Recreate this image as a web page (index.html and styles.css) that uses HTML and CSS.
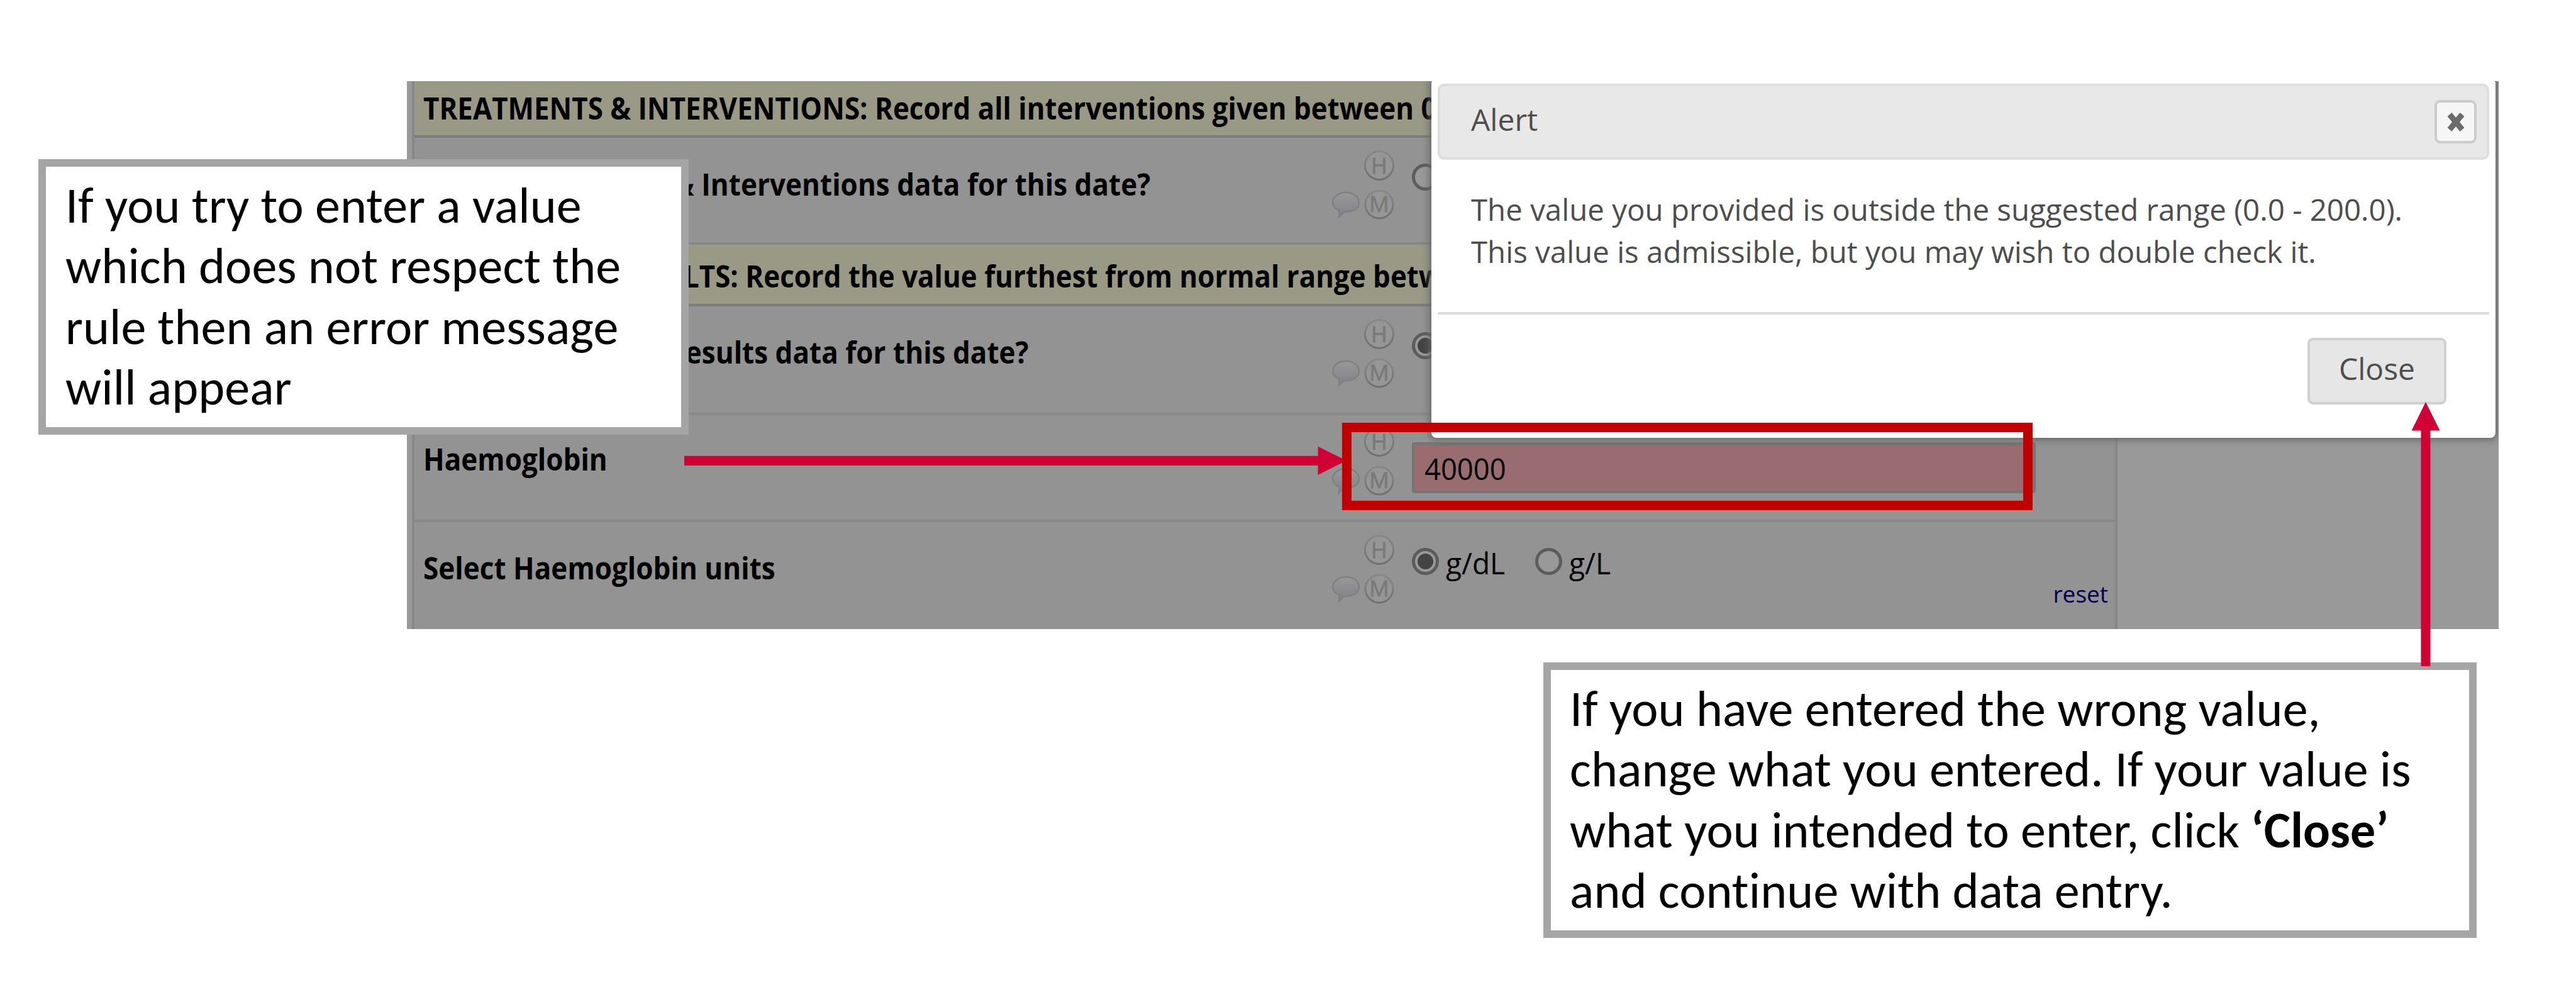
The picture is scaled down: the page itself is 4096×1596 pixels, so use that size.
FILE: index.html
```html
<!DOCTYPE html>
<html lang="en">
<head>
<meta charset="utf-8">
<title>Out-of-range value alert</title>
<link rel="stylesheet" href="styles.css">
</head>
<body>
<svg class="defs" aria-hidden="true">
  <defs>
    <linearGradient id="ring" x1="0" y1="0" x2="0" y2="1"><stop offset="0" stop-color="#888"/><stop offset="1" stop-color="#707070"/></linearGradient>
    <linearGradient id="puff" x1="0" y1="0" x2="0" y2="1"><stop offset="0" stop-color="#999"/><stop offset="1" stop-color="#808088"/></linearGradient>
    <symbol id="tools" viewBox="0 0 102 112">
      <circle cx="76" cy="24" r="22.5" fill="#969696" stroke="url(#ring)" stroke-width="3"/>
      <text class="glyph" x="76" y="36.5">H</text>
      <circle cx="76" cy="86" r="22" fill="#969696" stroke="url(#ring)" stroke-width="3"/>
      <text class="glyph" x="76" y="98">M</text>
      <path d="M23 67c12 0 21 7 21 16s-9 15-21 15l-3 0-8 8 1-10c-7-3-11-7-11-13 0-9 10-16 21-16z" fill="url(#puff)" stroke="#808082" stroke-width="2.5"/>
    </symbol>
  </defs>
</svg>
<main class="slide">
  <section class="form">
    <div class="table">
      <h2 class="band band-first"><span>TREATMENTS &amp; INTERVENTIONS: Record all interventions given between 0</span></h2>
      <div class="row r1">
        <span class="label">&amp; Interventions data for this date?</span>
        <svg class="tools"><use href="#tools"/></svg>
        <div class="field"><i class="radio"></i></div>
      </div>
      <h2 class="band band-results"><span>LTS: Record the value furthest from normal range betw</span></h2>
      <div class="row r2">
        <span class="label">esults data for this date?</span>
        <svg class="tools"><use href="#tools"/></svg>
        <div class="field"><i class="radio on"></i></div>
      </div>
      <div class="row r3">
        <span class="label">Haemoglobin</span>
        <svg class="tools"><use href="#tools"/></svg>
        <div class="field"><div class="input"><span>40000</span></div></div>
      </div>
      <div class="row r4">
        <span class="label">Select Haemoglobin units</span>
        <svg class="tools"><use href="#tools"/></svg>
        <div class="field"><i class="radio on"></i><span class="unit">g/dL</span><i class="radio"></i><span class="unit">g/L</span></div>
        <a class="reset">reset</a>
      </div>
    </div>
    <div class="dialog">
      <header class="dialog-head"><span>Alert</span>
        <b class="dismiss"><svg viewBox="0 0 32 32"><path d="M6 4l20 24M26 4L6 28" stroke="#6c6c6c" stroke-width="9" fill="none"/></svg></b>
      </header>
      <p class="dialog-text"><span>The value you provided is outside the suggested range (0.0 - 200.0).</span><span>This value is admissible, but you may wish to double check it.</span></p>
      <footer class="dialog-foot"><span class="button">Close</span></footer>
    </div>
  </section>

  <aside class="note note-left">If you try to enter a value<br>which does not respect the<br>rule then an error message<br>will appear</aside>
  <aside class="note note-right">If you have entered the wrong value,<br>change what you entered. If your value is<br>what you intended to enter, click <b>‘Close’</b><br>and continue with data entry.</aside>
  <svg class="arrows" viewBox="0 0 4096 1596"><path d="M1088 724.7H2095.6V709.7L2141 732.3 2095.6 755V740H1088zM3849.5 1059V684.6H3834.6L3857 639 3879.5 684.6H3864.5V1059z" fill="#d00034"/></svg>
  <div class="highlight"></div>
</main>
</body>
</html>
```
FILE: styles.css
```css
* { box-sizing: border-box; }
body { margin: 0; background: #fff; }
.defs { position: absolute; width: 0; height: 0; }
.glyph { font: 35px "Open Sans", sans-serif; fill: #7a7a7a; stroke: #7a7a7a; stroke-width: .8px; text-anchor: middle; }
.slide { position: relative; width: 4096px; height: 1596px; padding: 129px 0 0 647px; overflow: hidden; }

/* dimmed data-entry form */
.form { position: relative; width: 3326px; height: 871px; padding-left: 8px; background: #999; overflow: hidden; font: 48px/66px "Open Sans", sans-serif; color: #000; }
.table { width: 2712px; height: 871px; border: solid #888; border-width: 0 4px; background: #939393; white-space: nowrap; }
.band { height: 98px; margin: 0; padding: 17px 0 0 14px; border-top: 4px solid #868686; background: #999985; font-size: 48px; line-height: 66px; overflow: hidden; }
.band span { display: inline-block; transform: scaleX(.914); transform-origin: left; }
.band-first { height: 86px; padding-top: 10px; border-top: 0; }
.band-results { padding-left: 428px; }
.row { display: grid; grid-template-columns: 1444px 128px 1fr auto; height: 170px; padding-left: 14px; border-top: 4px solid #888; }
.band + .row { border-top-color: #7c7c7c; }
.r2 { height: 173px; }
.r4 { height: 174px; }
.label { justify-self: start; padding-top: 40px; font-weight: 700; transform: scaleX(.918); transform-origin: left; }
.r1 .label, .r2 .label { justify-self: end; transform-origin: right; }
.r1 .label { margin-right: 288px; padding-top: 41px; }
.r2 .label { margin-right: 481px; }
.r3 .label { padding-top: 37px; }
.tools { width: 102px; height: 112px; margin-top: 20px; }
.r3 .tools { margin-top: 18px; }
.field { display: flex; align-items: flex-start; }
.radio { width: 43px; height: 43px; margin-top: 41px; border: 5px solid #5c5c5c; border-radius: 50%; background: #999; }
.radio.on { background: radial-gradient(circle, #444 0 12px, #999 13px); }
.unit { margin: 32px 44px 0 11px; transform: scaleX(.96); transform-origin: left; }
.input { width: 992px; height: 81px; margin-top: 43px; padding: 5px 0 0 16px; border: 4px solid #757575; border-radius: 4px; background: #996c71; }
.input span { display: inline-block; transform: scaleX(.945); transform-origin: left; }
.reset { align-self: start; margin: 89px 11px 0 0; font-size: 37px; line-height: 50px; color: #00004f; }

/* alert dialog */
.dialog { position: absolute; left: 1629px; top: -4px; width: 1692px; height: 571px; padding: 8px 10px 0 10px; border-radius: 8px; background: #fff; box-shadow: 0 0 12px 3px #666; color: #4d4d4d; }
.dialog-head { display: flex; justify-content: space-between; align-items: center; height: 121px; padding: 0 16px 0 49px; border: 4px solid #dedede; border-radius: 10px; background: #e8e8e8; }
.dialog-head > span { padding-bottom: 8px; }
.dismiss { display: grid; place-items: center; width: 67px; height: 69px; border: 4px solid #ccc; border-radius: 9px; background: #f6f6f6; }
.dismiss svg { width: 32px; height: 32px; }
.dialog-text { height: 242px; margin: 0; padding: 45px 0 0 53px; line-height: 67.3px; white-space: nowrap; }
.dialog-text span { display: block; transform: scaleX(.988); transform-origin: left; }
.dialog-foot { display: flex; justify-content: flex-end; height: 180px; padding: 37px 68px 0 0; border-top: 4px solid #ddd; }
.button { display: flex; justify-content: center; width: 221px; height: 106px; padding-top: 12px; border: 4px solid #d0d0d0; border-radius: 9px; background: #e6e6e6; }

/* callouts over the form */
.note { position: absolute; border: 12px solid #a5a5a5; background: #fff; color: #000; font: 80px/96.4px Carlito, Calibri, Lato, sans-serif; font-variant-ligatures: none; white-space: nowrap; }
.note-left { left: 61px; top: 253px; width: 1034px; height: 438px; padding: 14px 0 0 31px; letter-spacing: .08px; }
.note-right { left: 2454px; top: 1053px; width: 1484px; height: 438px; padding: 14px 0 0 30px; letter-spacing: .1px; }
.arrows { position: absolute; left: 0; top: 0; width: 4096px; height: 1596px; }
.highlight { position: absolute; left: 2134px; top: 672px; width: 1098px; height: 139px; border: 15px solid #c00000; }
```
